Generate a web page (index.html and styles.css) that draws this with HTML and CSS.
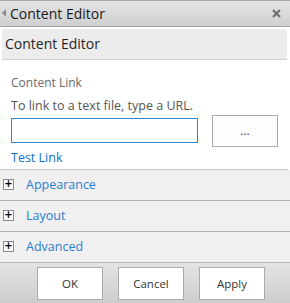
FILE: index.html
```html
<!DOCTYPE html>
<html lang="en">
<head>
    <meta charset="UTF-8">
    <title>Content Editor</title>
    <link rel="stylesheet" href="styles.css">
</head>
<body>
    <div class="panel">
        <div class="titlebar">
            <span class="arrow"></span>
            <span class="title">Content Editor</span>
            <svg class="close" width="9" height="9" viewBox="0 0 9 9">
                <path d="M1 1L8 8M8 1L1 8" stroke="#6b6b6b" stroke-width="2"/>
            </svg>
        </div>

        <div class="subhead">Content Editor</div>

        <!-- Content link section -->
        <div class="content">
            <div class="label">Content Link</div>
            <div class="hint">To link to a text file, type a URL.</div>
            <div class="link-row">
                <input type="text" class="url-input">
                <button class="browse">...</button>
            </div>
            <a href="#" class="test-link">Test Link</a>
        </div>

        <!-- Collapsed groups -->
        <div class="groups">
            <div class="group"><span class="expander">+</span><span>Appearance</span></div>
            <div class="group"><span class="expander">+</span><span>Layout</span></div>
            <div class="group"><span class="expander">+</span><span>Advanced</span></div>
        </div>

        <div class="footer">
            <button>OK</button>
            <button>Cancel</button>
            <button>Apply</button>
        </div>
    </div>
</body>
</html>
```

FILE: styles.css
```css
body {
    margin: 0;
    font-family: "Open Sans", "Noto Sans", sans-serif;
    background-color: white;
}

.panel {
    width: 290px;
    height: 303px;
    display: flex;
    flex-direction: column;
}

/* Title bar */
.titlebar {
    height: 25px;
    border-top: 1px solid #a9a9a9;
    border-bottom: 1px solid #a4a4a4;
    background: linear-gradient(#e4e4e4, #cfcfcf);
    display: flex;
    align-items: center;
    padding: 0 9px 0 2px;
}

.arrow {
    width: 0;
    height: 0;
    border-top: 4px solid transparent;
    border-bottom: 4px solid transparent;
    border-right: 4px solid #8a8a8a;
    margin-right: 4px;
}

.title {
    flex: 1;
    font-size: 14px;
    color: #1a1a1a;
}

/* Sub header */
.subhead {
    margin: 2px 3px 0 2px;
    height: 30px;
    line-height: 30px;
    background-color: #ececec;
    border-bottom: 1px solid #d2d2d2;
    padding-left: 3px;
    font-size: 14px;
    color: #262626;
}

/* Content link */
.content {
    padding: 14px 0 3px 11px;
    border-bottom: 1px solid #c8c8c8;
    margin-right: 2px;
}

.label {
    font-size: 12px;
    color: #6a6a6a;
    line-height: 17px;
}

.hint {
    font-size: 12.5px;
    color: #555;
    line-height: 17px;
    margin-top: 6px;
}

.link-row {
    display: flex;
    align-items: center;
    gap: 14px;
    margin-top: 1px;
}

.url-input {
    width: 187px;
    height: 25px;
    box-sizing: border-box;
    border: 1px solid #2b88d8;
    margin: 0;
    padding: 0;
}

.browse {
    width: 66px;
    height: 32px;
    background-color: #fdfdfd;
    border: 1px solid #ababab;
    font-family: inherit;
    font-size: 12px;
    color: #444;
    padding: 0;
}

.test-link {
    display: block;
    font-size: 12.5px;
    color: #0f6fc6;
    text-decoration: none;
    line-height: 16px;
    margin-top: 3px;
}

/* Groups */
.groups {
    background-color: #f0f0f0;
    flex: 1;
}

.group {
    height: 30px;
    display: flex;
    align-items: center;
    border-bottom: 1px solid #b0b0b0;
    font-size: 12.5px;
    color: #2a7ed2;
}

.group:last-child {
    border-bottom: none;
}

.expander {
    width: 9px;
    height: 9px;
    border: 1px solid #8c8c8c;
    background-color: #fcfcfc;
    color: #000;
    font-family: "DejaVu Sans", sans-serif;
    font-size: 10px;
    font-weight: bold;
    line-height: 8px;
    text-align: center;
    margin: 0 12px 0 3px;
}

/* Footer */
.footer {
    height: 42px;
    border-top: 1px solid #b4b4b4;
    background: linear-gradient(#e4e4e4, #cdcdcd);
    display: flex;
    padding: 4px 0 0 37px;
    gap: 15px;
    box-sizing: border-box;
}

.footer button {
    width: 66px;
    height: 33px;
    background-color: white;
    border: 1px solid #ababab;
    font-family: inherit;
    font-size: 11.5px;
    color: #333;
    padding: 0;
}
```
